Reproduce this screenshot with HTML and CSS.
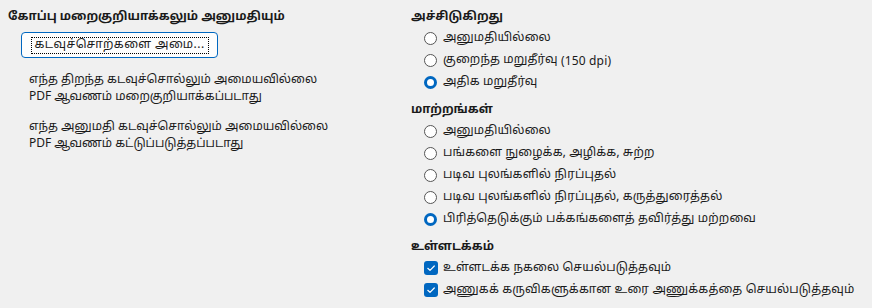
FILE: index.html
```html
<!DOCTYPE html>
<html lang="ta">
<head>
<meta charset="utf-8">
<link rel="stylesheet" href="styles.css">
</head>
<body>
<div class="page">
  <div class="col left">
    <div class="heading">கோப்பு மறைகுறியாக்கலும் அனுமதியும்</div>
    <div class="btnrow"><button class="btn"><span class="focus">கடவுச்சொற்களை அமை...</span></button></div>
    <div class="note">எந்த திறந்த கடவுச்சொல்லும் அமையவில்லை<br><span class="lat">PDF</span> ஆவணம் மறைகுறியாக்கப்படாது</div>
    <div class="note">எந்த அனுமதி கடவுச்சொல்லும் அமையவில்லை<br><span class="lat">PDF</span> ஆவணம் கட்டுப்படுத்தப்படாது</div>
  </div>
  <div class="col right">
    <div class="heading">அச்சிடுகிறது</div>
    <div class="opts">
      <div class="opt"><span class="radio"></span>அனுமதியில்லை</div>
      <div class="opt"><span class="radio"></span>குறைந்த மறுதீர்வு&nbsp;<span class="lat">(150 dpi)</span></div>
      <div class="opt"><span class="radio on"></span>அதிக மறுதீர்வு</div>
    </div>
    <div class="heading">மாற்றங்கள்</div>
    <div class="opts">
      <div class="opt"><span class="radio"></span>அனுமதியில்லை</div>
      <div class="opt"><span class="radio"></span>பங்களை நுழைக்க, அழிக்க, சுற்ற</div>
      <div class="opt"><span class="radio"></span>படிவ புலங்களில் நிரப்புதல்</div>
      <div class="opt"><span class="radio"></span>படிவ புலங்களில் நிரப்புதல், கருத்துரைத்தல்</div>
      <div class="opt"><span class="radio on"></span>பிரித்தெடுக்கும் பக்கங்களைத் தவிர்த்து மற்றவை</div>
    </div>
    <div class="heading">உள்ளடக்கம்</div>
    <div class="opts">
      <div class="opt"><span class="check"><svg viewBox="0 0 14 14" width="14" height="14"><path d="M3.8 7.3 L6 9.4 L10.3 5" fill="none" stroke="#fff" stroke-width="1.2" stroke-linecap="round" stroke-linejoin="round"/></svg></span>உள்ளடக்க நகலை செயல்படுத்தவும்</div>
      <div class="opt"><span class="check"><svg viewBox="0 0 14 14" width="14" height="14"><path d="M3.8 7.3 L6 9.4 L10.3 5" fill="none" stroke="#fff" stroke-width="1.2" stroke-linecap="round" stroke-linejoin="round"/></svg></span>அணுகக் கருவிகளுக்கான உரை அணுக்கத்தை செயல்படுத்தவும்</div>
    </div>
  </div>
</div>
</body>
</html>
```
FILE: styles.css
```css
html, body {
  margin: 0;
  padding: 0;
  background: #f0f0f0;
}
body {
  font-family: "Noto Sans Tamil", "Noto Sans", "DejaVu Sans", sans-serif;
  font-size: 12px;
  color: #1a1a1a;
  width: 872px;
  height: 308px;
  overflow: hidden;
}
.lat {
  font-family: "Noto Sans", sans-serif;
  font-size: 12px;
}
.page {
  display: flex;
  padding: 7px 0 0 8px;
}
.col.left {
  width: 403px;
}
.col.right {
  flex: 1;
}
.heading {
  font-weight: bold;
  height: 20px;
  line-height: 20px;
}
.btnrow {
  padding: 5px 0 0 13px;
}
.btn {
  width: 197px;
  height: 26px;
  background: #fdfdfd;
  border: 1px solid #0067c0;
  border-radius: 4px;
  font: inherit;
  color: #1a1a1a;
  padding: 0;
  display: flex;
  align-items: center;
  justify-content: center;
}
.focus {
  display: block;
  box-sizing: border-box;
  width: 178px;
  height: 17px;
  line-height: 15px;
  border: 1px dotted #000;
  text-align: center;
  white-space: nowrap;
  letter-spacing: 0.45px;
}
.note {
  padding-left: 21px;
  line-height: 16px;
  margin-top: 14px;
}
.opts {
  padding-left: 13px;
  margin-bottom: 7px;
}
.opt {
  display: flex;
  align-items: center;
  height: 22px;
  letter-spacing: 0.15px;
}
.radio {
  box-sizing: border-box;
  width: 13px;
  height: 13px;
  border: 1px solid #555;
  border-radius: 50%;
  background: #fff;
  margin-right: 6px;
  flex: none;
}
.radio.on {
  border: 3.5px solid #0067c0;
  background: #fff;
}
.check {
  box-sizing: border-box;
  width: 14px;
  height: 14px;
  border-radius: 3px;
  background: #0067c0;
  margin-right: 5px;
  flex: none;
  display: flex;
}
```
